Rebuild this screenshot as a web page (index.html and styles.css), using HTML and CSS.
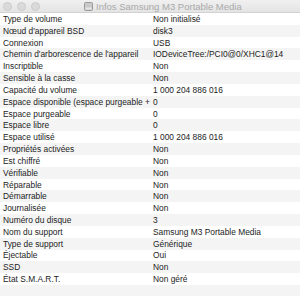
FILE: index.html
```html
<!DOCTYPE html>
<html lang="fr">
<head>
    <meta charset="UTF-8">
    <title>Infos Samsung M3 Portable Media</title>
    <link rel="stylesheet" href="styles.css">
</head>
<body>
    <div class="window">
        <div class="titlebar">
            <div class="lights">
                <span class="light"></span>
                <span class="light"></span>
                <span class="light"></span>
            </div>
            <div class="title">
                <svg class="disk" width="9" height="9" viewBox="0 0 9 9">
                    <rect x="0.5" y="0.5" width="8" height="8" rx="1" fill="#c9c9c9" stroke="#9a9a9a"/>
                    <rect x="1.5" y="5.5" width="6" height="2" fill="#e6e6e6"/>
                </svg>
                <span>Infos Samsung M3 Portable Media</span>
            </div>
        </div>
        <div class="rows">
            <div class="row"><span class="key">Type de volume</span><span class="val">Non initialisé</span></div>
            <div class="row"><span class="key">Nœud d'appareil BSD</span><span class="val">disk3</span></div>
            <div class="row"><span class="key">Connexion</span><span class="val">USB</span></div>
            <div class="row"><span class="key">Chemin d'arborescence de l'appareil</span><span class="val">IODeviceTree:/PCI0@0/XHC1@14</span></div>
            <div class="row"><span class="key">Inscriptible</span><span class="val">Non</span></div>
            <div class="row"><span class="key">Sensible à la casse</span><span class="val">Non</span></div>
            <div class="row"><span class="key">Capacité du volume</span><span class="val">1 000 204 886 016</span></div>
            <div class="row"><span class="key">Espace disponible (espace purgeable +</span><span class="val">0</span></div>
            <div class="row"><span class="key">Espace purgeable</span><span class="val">0</span></div>
            <div class="row"><span class="key">Espace libre</span><span class="val">0</span></div>
            <div class="row"><span class="key">Espace utilisé</span><span class="val">1 000 204 886 016</span></div>
            <div class="row"><span class="key">Propriétés activées</span><span class="val">Non</span></div>
            <div class="row"><span class="key">Est chiffré</span><span class="val">Non</span></div>
            <div class="row"><span class="key">Vérifiable</span><span class="val">Non</span></div>
            <div class="row"><span class="key">Réparable</span><span class="val">Non</span></div>
            <div class="row"><span class="key">Démarrable</span><span class="val">Non</span></div>
            <div class="row"><span class="key">Journalisée</span><span class="val">Non</span></div>
            <div class="row"><span class="key">Numéro du disque</span><span class="val">3</span></div>
            <div class="row"><span class="key">Nom du support</span><span class="val">Samsung M3 Portable Media</span></div>
            <div class="row"><span class="key">Type de support</span><span class="val">Générique</span></div>
            <div class="row"><span class="key">Éjectable</span><span class="val">Oui</span></div>
            <div class="row"><span class="key">SSD</span><span class="val">Non</span></div>
            <div class="row"><span class="key">État S.M.A.R.T.</span><span class="val">Non géré</span></div>
            <div class="row"><span class="key"></span><span class="val"></span></div>
        </div>
    </div>
</body>
</html>
```

FILE: styles.css
```css
body {
    margin: 0;
    background-color: #ffffff;
    font-family: 'Liberation Sans', Arial, sans-serif;
    font-size: 8.4px;
    color: #1c1c1c;
    overflow: hidden;
}

.window {
    width: 300px;
    height: 296px;
    overflow: hidden;
}

.titlebar {
    height: 12px;
    display: flex;
    align-items: center;
    position: relative;
    background: linear-gradient(#f0f0f0, #e4e4e4);
    border-bottom: 1px solid #d2d2d2;
}

.lights {
    display: flex;
    gap: 5px;
    padding-left: 3px;
}

.light {
    width: 7px;
    height: 7px;
    border-radius: 50%;
    background-color: #dadada;
    border: 0.5px solid #cbcbcb;
}

.title {
    position: absolute;
    left: 84px;
    top: 0;
    height: 12px;
    display: flex;
    align-items: center;
    gap: 3px;
    font-size: 9.5px;
    color: #a9a9a9;
}

.rows {
    display: flex;
    flex-direction: column;
}

.row {
    height: 11.83px;
    display: flex;
    align-items: center;
    white-space: nowrap;
}

.row:nth-child(even) {
    background-color: #f4f4f4;
}

.key {
    width: 147px;
    padding-left: 3px;
    overflow: hidden;
}

.val {
    padding-left: 3px;
}
```
